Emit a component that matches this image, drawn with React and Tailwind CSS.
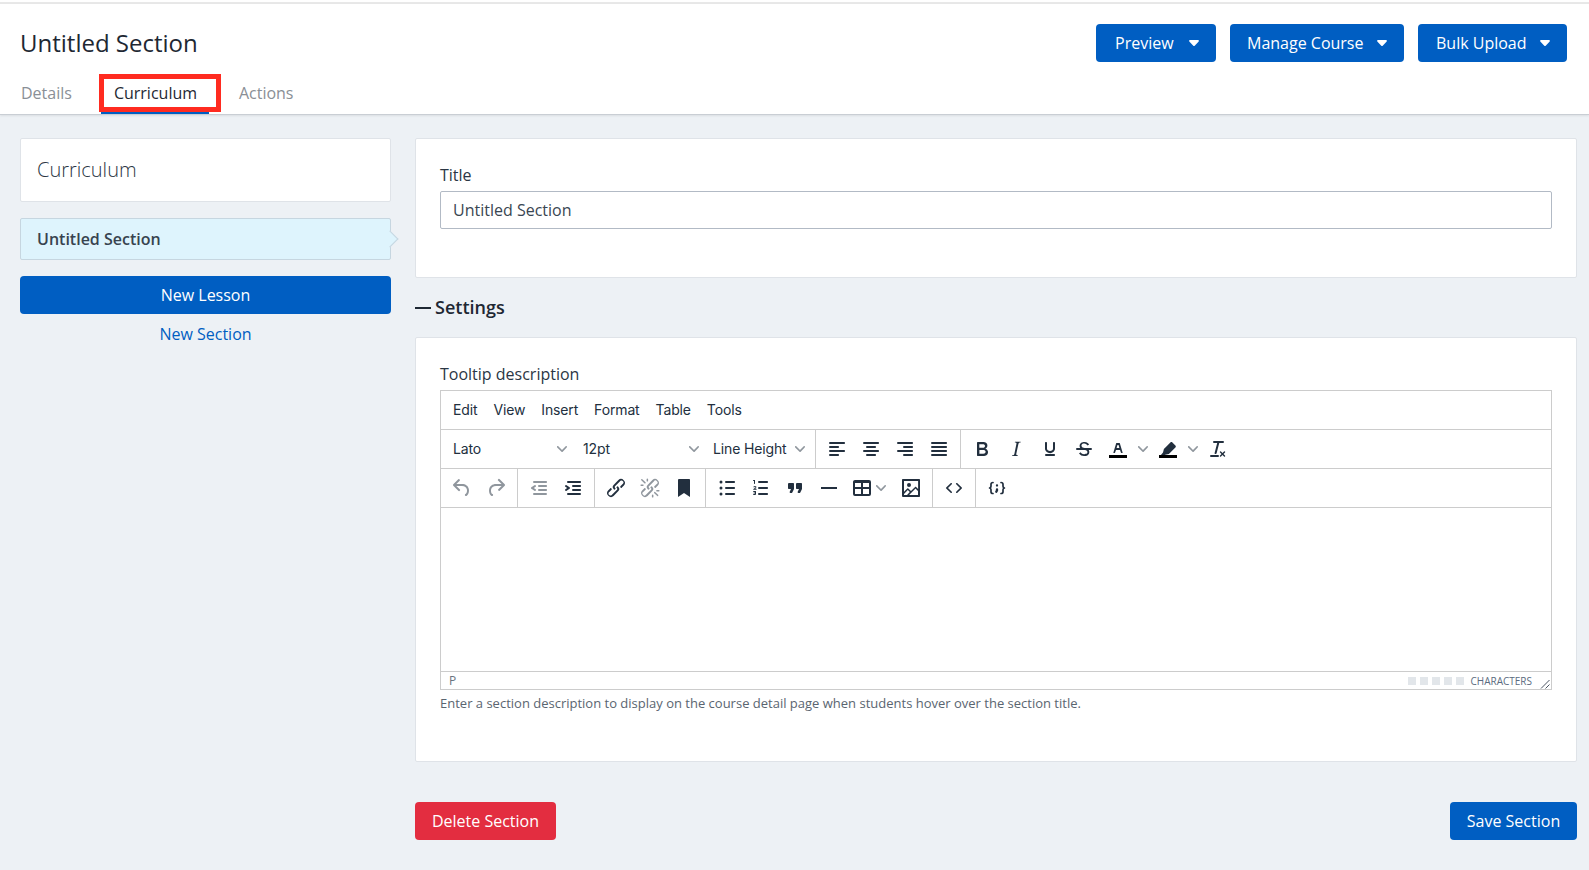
import React from "react";

const P = {
  alignLeft: "M5 5h14c.6 0 1 .4 1 1s-.4 1-1 1H5a1 1 0 1 1 0-2zm0 4h8c.6 0 1 .4 1 1s-.4 1-1 1H5a1 1 0 1 1 0-2zm0 8h8c.6 0 1 .4 1 1s-.4 1-1 1H5a1 1 0 0 1 0-2zm0-4h14c.6 0 1 .4 1 1s-.4 1-1 1H5a1 1 0 0 1 0-2z",
  alignCenter: "M5 5h14c.6 0 1 .4 1 1s-.4 1-1 1H5a1 1 0 1 1 0-2zm3 4h8c.6 0 1 .4 1 1s-.4 1-1 1H8a1 1 0 1 1 0-2zm0 8h8c.6 0 1 .4 1 1s-.4 1-1 1H8a1 1 0 0 1 0-2zm-3-4h14c.6 0 1 .4 1 1s-.4 1-1 1H5a1 1 0 0 1 0-2z",
  alignRight: "M5 5h14c.6 0 1 .4 1 1s-.4 1-1 1H5a1 1 0 1 1 0-2zm6 4h8c.6 0 1 .4 1 1s-.4 1-1 1h-8a1 1 0 0 1 0-2zm0 8h8c.6 0 1 .4 1 1s-.4 1-1 1h-8a1 1 0 0 1 0-2zm-6-4h14c.6 0 1 .4 1 1s-.4 1-1 1H5a1 1 0 0 1 0-2z",
  justify: "M5 5h14c.6 0 1 .4 1 1s-.4 1-1 1H5a1 1 0 1 1 0-2zm0 4h14c.6 0 1 .4 1 1s-.4 1-1 1H5a1 1 0 1 1 0-2zm0 4h14c.6 0 1 .4 1 1s-.4 1-1 1H5a1 1 0 0 1 0-2zm0 4h14c.6 0 1 .4 1 1s-.4 1-1 1H5a1 1 0 0 1 0-2z",
  bold: "M7.8 19c-.3 0-.5 0-.6-.2l-.2-.5V5.7c0-.2 0-.4.2-.5l.6-.2h5c1.5 0 2.7.3 3.5 1 .7.6 1.1 1.4 1.1 2.5a3 3 0 0 1-.6 1.9c-.4.6-1 1-1.6 1.2.4.1.9.3 1.3.6s.8.7 1 1.2c.4.4.5 1 .5 1.6 0 1.3-.4 2.3-1.3 3-.8.7-2.1 1-3.8 1H7.8zm5-8.3c.6 0 1.2-.1 1.6-.5.4-.3.6-.7.6-1.3 0-1.1-.8-1.7-2.4-1.7H9.3v3.5h3.4zm.5 6c.7 0 1.3-.1 1.7-.4.4-.4.6-.9.6-1.5s-.2-1-.7-1.4c-.4-.3-1-.4-2-.4H9.4v3.8h4z",
  italic: "M16.7 4.7l-.1.9h-.3c-.6 0-1 0-1.4.3-.3.3-.4.6-.5 1.1l-2.1 9.8v.6c0 .5.4.8 1.4.8h.2l-.2.8H8l.2-.8h.2c1.1 0 1.8-.5 2-1.5l2-9.8.1-.5c0-.6-.4-.8-1.4-.8h-.3l.2-.9h5.8z",
  underline: "M16 5c.6 0 1 .4 1 1v5.5a4 4 0 0 1-.4 1.8l-1 1.4a5.3 5.3 0 0 1-5.5 1 5 5 0 0 1-1.6-1c-.5-.4-.8-.9-1.1-1.4a4 4 0 0 1-.4-1.8V6c0-.6.4-1 1-1s1 .4 1 1v5.5c0 .3 0 .6.2 1l.6.7a3.3 3.3 0 0 0 2.2.8 3.4 3.4 0 0 0 2.2-.8c.3-.2.4-.5.6-.8l.2-.9V6c0-.6.4-1 1-1zM8 17h8c.6 0 1 .4 1 1s-.4 1-1 1H8a1 1 0 0 1 0-2z",
  strike: "M15.6 8.5c-.5-.7-1-1.1-1.3-1.3-.6-.4-1.3-.6-2-.6-2.7 0-2.8 1.7-2.8 2.1 0 1.6 1.8 2 3.2 2.3 4.4.9 4.6 2.8 4.6 3.9 0 1.4-.7 4.1-5 4.1A6.2 6.2 0 0 1 7 16.4l1.5-1.1c.4.6 1.6 2 3.7 2 1.6 0 2.5-.4 3-1.2.4-.8.3-2-.8-2.6-.7-.4-1.6-.7-2.9-1-1-.2-3.9-.8-3.9-3.6C7.6 6 10.3 5 12.4 5c2.9 0 4.2 1.6 4.7 2.4l-1.5 1.1zM5 11h14a1 1 0 0 1 0 2H5a1 1 0 0 1 0-2z",
  textA: "M8.7 16h-.8a.5.5 0 0 1-.5-.6l2.7-9c.1-.3.3-.4.5-.4h2.8c.2 0 .4.1.5.4l2.7 9a.5.5 0 0 1-.5.6h-.8a.5.5 0 0 1-.4-.4l-.7-2.2c0-.3-.3-.4-.5-.4h-3.4c-.2 0-.4.1-.5.4l-.7 2.2c0 .3-.2.4-.4.4zm2.6-7.6l-.6 2a.5.5 0 0 0 .5.6h1.6a.5.5 0 0 0 .5-.6l-.6-2c0-.3-.3-.4-.5-.4h-.4c-.2 0-.4.1-.5.4z",
  marker: "M7 15.500l.9-3.600L14.400 5.400c.6-.6 1.400-.6 2 0l3 3c.6.6.6 1.400 0 2l-6.500 6.500-3.600.9-.9.700H4.500L7 15.500z",
  removeFormat: "M13.2 6a1 1 0 0 1 0 .2l-2.6 10a1 1 0 0 1-1 .8h-.2a.8.8 0 0 1-.8-1l2.6-10H8a1 1 0 1 1 0-2h9a1 1 0 0 1 0 2h-3.8zM5 18h7a1 1 0 0 1 0 2H5a1 1 0 0 1 0-2zm13 1.5L16.5 18 15 19.5a.7.7 0 0 1-1-1l1.5-1.5-1.5-1.5a.7.7 0 0 1 1-1l1.5 1.5 1.5-1.5a.7.7 0 0 1 1 1L17.5 17l1.5 1.5a.7.7 0 0 1-1 1z",
  undo: "M6.4 8H12c3.7 0 6.2 2 6.8 5.1.6 2.7-.4 5.6-2.3 6.8a1 1 0 0 1-1-1.8c1.1-.6 1.8-2.7 1.4-4.6-.5-2.1-2.1-3.5-4.9-3.5H6.4l3.3 3.3a1 1 0 1 1-1.4 1.4l-5-5a1 1 0 0 1 0-1.4l5-5a1 1 0 0 1 1.4 1.4L6.4 8z",
  redo: "M17.6 10H12c-2.8 0-4.4 1.4-4.9 3.5-.4 2 .3 4 1.4 4.6a1 1 0 1 1-1 1.8c-2-1.2-2.9-4.1-2.3-6.8.6-3 3-5.1 6.8-5.1h5.6l-3.3-3.3a1 1 0 1 1 1.4-1.4l5 5a1 1 0 0 1 0 1.4l-5 5a1 1 0 0 1-1.4-1.4l3.3-3.3z",
  outdent: "M7 5h12c.6 0 1 .4 1 1s-.4 1-1 1H7a1 1 0 1 1 0-2zm5 4h7c.6 0 1 .4 1 1s-.4 1-1 1h-7a1 1 0 0 1 0-2zm0 4h7c.6 0 1 .4 1 1s-.4 1-1 1h-7a1 1 0 0 1 0-2zm-5 4h12a1 1 0 0 1 0 2H7a1 1 0 0 1 0-2zm1.6-3.8a1 1 0 0 1-1.2 1.6l-3-2a1 1 0 0 1 0-1.6l3-2a1 1 0 0 1 1.2 1.6L6.8 12l1.8 1.2z",
  indent: "M7 5h12c.6 0 1 .4 1 1s-.4 1-1 1H7a1 1 0 1 1 0-2zm5 4h7c.6 0 1 .4 1 1s-.4 1-1 1h-7a1 1 0 0 1 0-2zm0 4h7c.6 0 1 .4 1 1s-.4 1-1 1h-7a1 1 0 0 1 0-2zm-5 4h12a1 1 0 0 1 0 2H7a1 1 0 0 1 0-2zm-2.6-3.8L6.2 12l-1.8-1.2a1 1 0 0 1 1.2-1.6l3 2a1 1 0 0 1 0 1.6l-3 2a1 1 0 1 1-1.2-1.6z",
  link: "M6.2 12.3a1 1 0 0 1 1.4 1.4l-2 2a2 2 0 1 0 2.6 2.8l4.8-4.8a1 1 0 0 0 0-1.4 1 1 0 1 1 1.4-1.3 2.9 2.9 0 0 1 0 4L9.6 20a3.9 3.9 0 0 1-5.5-5.5l2-2zm11.6-.6a1 1 0 0 1-1.4-1.4l2-2a2 2 0 1 0-2.6-2.8L11 10.3a1 1 0 0 0 0 1.4A1 1 0 1 1 9.6 13a2.9 2.9 0 0 1 0-4L14.4 4a3.9 3.9 0 0 1 5.5 5.5l-2 2z",
  unlink: "M6.2 12.3a1 1 0 0 1 1.4 1.4l-2.1 2a2 2 0 1 0 2.7 2.8l4.8-4.8a1 1 0 0 0 0-1.4 1 1 0 1 1 1.4-1.3 2.9 2.9 0 0 1 0 4L9.6 20a3.9 3.9 0 0 1-5.5-5.5l2-2zm11.6-.6a1 1 0 0 1-1.4-1.4l2.1-2a2 2 0 1 0-2.7-2.8L11 10.3a1 1 0 0 0 0 1.4A1 1 0 1 1 9.6 13a2.9 2.9 0 0 1 0-4L14.4 4a3.9 3.9 0 0 1 5.5 5.5l-2 2zM7.6 6.3a.8.8 0 0 1-1 1.1L3.3 4.2a.7.7 0 1 1 1-1l3.2 3.1zM5.1 8.6a.8.8 0 0 1 0 1.5H3a.8.8 0 0 1 0-1.5H5zm5-3.5a.8.8 0 0 1-1.5 0V3a.8.8 0 0 1 1.5 0v2zm6 11.8a.8.8 0 0 1 1-1l3.2 3.2a.8.8 0 0 1-1 1L16 17zm-2.2 2a.8.8 0 0 1 1.5 0V21a.8.8 0 0 1-1.5 0V19zm5-3.5a.7.7 0 1 1 0-1.5H21a.8.8 0 0 1 0 1.5h-2.1z",
  bookmark: "M6 4v17l6-4 6 4V4c0-.6-.4-1-1-1H7a1 1 0 0 0-1 1z",
  bullist: "M11 5h8c.6 0 1 .4 1 1s-.4 1-1 1h-8a1 1 0 0 1 0-2zm0 6h8c.6 0 1 .4 1 1s-.4 1-1 1h-8a1 1 0 0 1 0-2zm0 6h8c.6 0 1 .4 1 1s-.4 1-1 1h-8a1 1 0 0 1 0-2zM4.5 6a1.5 1.5 0 1 1 3 0 1.5 1.5 0 0 1-3 0zm0 6a1.5 1.5 0 1 1 3 0 1.5 1.5 0 0 1-3 0zm0 6a1.5 1.5 0 1 1 3 0 1.5 1.5 0 0 1-3 0z",
  numlist: "M10 17h8c.6 0 1 .4 1 1s-.4 1-1 1h-8a1 1 0 0 1 0-2zm0-6h8c.6 0 1 .4 1 1s-.4 1-1 1h-8a1 1 0 0 1 0-2zm0-6h8c.6 0 1 .4 1 1s-.4 1-1 1h-8a1 1 0 1 1 0-2zM6 4v3.5c0 .3-.2.5-.5.5a.5.5 0 0 1-.5-.5V5h-.5a.5.5 0 0 1 0-1H6zm-1 8.8l.2-.2 1.2-1a.5.5 0 0 0-.7-.7l-.3.3a.5.5 0 1 1-.8-.6c.3-.6 1.9-1.2 2.6-.1.5.8-.1 1.4-.5 1.8l-.5.5h1.1c.2 0 .4.2.4.5s-.2.5-.5.5H4.6c-.4 0-.6-.4-.4-.7zM7 15.4v2.9c0 .5-.4.7-1 .7H4.6a.5.5 0 0 1 0-1H6v-.5H5a.5.5 0 0 1 0-1h1v-.5H4.6a.5.5 0 0 1 0-1H6c.6 0 1 .1 1 .4z",
  quote: "M7.5 17h.9c.4 0 .7-.2.9-.6L11 13V8c0-.6-.4-1-1-1H6a1 1 0 0 0-1 1v4c0 .6.4 1 1 1h2l-1.3 2.7a1 1 0 0 0 .8 1.3zm8 0h.9c.4 0 .7-.2.9-.6L19 13V8c0-.6-.4-1-1-1h-4a1 1 0 0 0-1 1v4c0 .6.4 1 1 1h2l-1.3 2.7a1 1 0 0 0 .8 1.3z",
  hr: "M4 11h16v2H4z",
  table: "M19 4a2 2 0 0 1 2 2v12a2 2 0 0 1-2 2H5a2 2 0 0 1-2-2V6c0-1.100.9-2 2-2h14zM11 7H5v4h6V7zm8 0h-6v4h6V7zm-8 6H5v5h6v-5zm8 0h-6v5h6v-5z",
  image: "M5 15.7l3.3-3.2c.3-.3.7-.3 1 0L12 15l4.1-4c.3-.4.8-.4 1 0l2 1.9V5H5v10.7zM5 18V19h3l2.8-2.9-2-2L5 17.9zm14-3l-2.5-2.4-6.4 6.5H19v-4zM4 3h16c.6 0 1 .4 1 1v16c0 .6-.4 1-1 1H4a1 1 0 0 1-1-1V4c0-.6.4-1 1-1zm6 8a2 2 0 1 0 0-4 2 2 0 0 0 0 4z",
  code: "M9.8 15.7c.3.3.3.8 0 1-.3.4-.9.4-1.2 0l-4.4-4.1a.8.8 0 0 1 0-1.2l4.4-4.2c.3-.3.9-.3 1.2 0 .3.3.3.8 0 1.1L6 12l3.8 3.7zm4.4 0L18 12l-3.8-3.7a.7.7 0 0 1 0-1.1c.3-.3.9-.3 1.2 0l4.4 4.2c.3.3.3.9 0 1.2l-4.4 4.2c-.3.3-.9.3-1.2 0a.8.8 0 0 1 0-1.1z",
};

function Icon({ d, dim, bar, odd }) {
  return (
    <svg width="24" height="24" viewBox="0 0 24 24" className={dim ? "opacity-50" : ""} fill="#222f3e" fillRule={odd ? "evenodd" : "nonzero"}>
      <path d={d} />
      {bar ? <path d="M3 18h18v3H3z" fill="#000" /> : null}
    </svg>
  );
}

function Btn({ d, dim, bar, odd }) {
  return (
    <span className="w-[34px] h-[34px] flex items-center justify-center shrink-0">
      <Icon d={d} dim={dim} bar={bar} odd={odd} />
    </span>
  );
}

function Chevron({ cls }) {
  return (
    <svg width="10" height="10" viewBox="0 0 10 10" className={cls} fill="#222f3e" fillOpacity="0.5">
      <path d="M8.7 2.2c.3-.3.8-.3 1 0 .4.4.4.9 0 1.2L5.7 7.8c-.3.3-.9.3-1.2 0L.2 3.4a.8.8 0 0 1 0-1.2c.3-.3.8-.3 1.1 0L5 6l3.7-3.8z" />
    </svg>
  );
}

function ChevBtn() {
  return (
    <span className="w-[16px] h-[34px] flex items-center justify-center shrink-0">
      <Chevron />
    </span>
  );
}

function Select({ label, w }) {
  return (
    <span className={`h-[34px] flex items-center justify-between pl-2 pr-[4px] pb-[1px] shrink-0 ${w}`}>
      <span>{label}</span>
      <Chevron />
    </span>
  );
}

function Group({ children, w, last }) {
  return (
    <div className={`h-full flex items-center pl-1 shrink-0 ${w} ${last ? "" : "border-r border-[#cccccc]"}`}>
      {children}
    </div>
  );
}

function Caret() {
  return (
    <svg width="10" height="6" viewBox="0 0 10 6" fill="#ffffff">
      <path d="M1 0h8c.8 0 1.200.9.700 1.400L5.700 5.700c-.4.4-1 .4-1.400 0L.3 1.400C-.2.900.2 0 1 0z" />
    </svg>
  );
}

function HeaderButton({ label, w, pl }) {
  return (
    <button className={`h-[38px] ${w} ${pl} bg-[#005ec2] rounded-[4px] text-white text-[16px] flex items-center justify-between pr-[17px]`}>
      <span>{label}</span>
      <Caret />
    </button>
  );
}

export default function App() {
  return (
    <div className="min-h-[870px] bg-[#edf1f5] text-[#2b3644] flex flex-col font-['Open_Sans',sans-serif]">
      <div className="h-[2px] bg-white" />
      <div className="h-[2px] bg-[#e8e8e8]" />
      <header className="h-[111px] bg-white border-b border-[#c9ced4] shadow-[0_1px_2px_rgba(0,0,0,0.08)] flex flex-col">
        <div className="flex justify-between items-start pl-5 pr-[22px] pt-5 h-[70px]">
          <h1 className="text-[24px] leading-[38px] text-[#1e2833]">Untitled Section</h1>
          <div className="flex gap-[14px]">
            <HeaderButton label="Preview" w="w-[120px]" pl="pl-[19px]" />
            <HeaderButton label="Manage Course" w="w-[174px]" pl="pl-[17px]" />
            <HeaderButton label="Bulk Upload" w="w-[149px]" pl="pl-[18px]" />
          </div>
        </div>
        <nav className="h-[40px] flex pl-[21px] text-[16px] leading-[38px]">
          <span className="text-[#8a8f96] mr-[29px]">Details</span>
          <span className="relative w-[108px] pl-[13px] h-[40px] text-[#1e2833] border-b-[3px] border-[#005ec2] mr-[17px]">
            Curriculum
            <span className="absolute left-[-2px] top-0 w-[122px] h-[38px] border-[5px] border-[#ff2b20]" />
          </span>
          <span className="text-[#8a8f96] pl-[13px]">Actions</span>
        </nav>
      </header>

      <main className="flex pl-5 pr-[12px] pt-[23px] gap-6 items-start">
        <aside className="w-[371px] shrink-0 flex flex-col">
          <div className="h-[64px] bg-white border border-[#dfe3e8] rounded-[2px] flex items-center pl-4 text-[20px] font-light text-[#2b3644]">
            Curriculum
          </div>
          <div className="relative mt-4 h-[42px] bg-[#def4fd] border border-[#c6d6e0] rounded-[2px] flex items-center pl-4 text-[16px] font-semibold text-[#37434f]">
            Untitled Section
            <span className="absolute right-[-6px] top-[14px] w-[12px] h-[12px] rotate-45 bg-[#def4fd] border-t border-r border-[#c6d6e0]" />
          </div>
          <button className="mt-4 h-[38px] bg-[#005ec2] rounded-[4px] text-white text-[16px]">New Lesson</button>
          <div className="mt-2 text-center text-[16px] leading-6 text-[#005ec2]">New Section</div>
        </aside>

        <section className="flex-1 min-w-0 flex flex-col">
          <div className="h-[140px] bg-white border border-[#dfe3e8] rounded-[2px] pt-6 pl-6 pr-6">
            <div className="text-[16px] leading-6 text-[#2b3644]">Title</div>
            <div className="mt-1 h-[38px] border border-[#b2bac5] rounded-[2px] flex items-center pl-3 text-[16px] text-[#3a4652]">
              Untitled Section
            </div>
          </div>

          <div className="h-[59px] flex items-center gap-1 text-[18px] font-semibold text-[#1e2833]">
            <span className="w-4 h-[2px] bg-[#1e2833]" />
            <span>Settings</span>
          </div>

          <div className="h-[425px] bg-white border border-[#dfe3e8] rounded-[2px] pt-6 px-6">
            <div className="text-[16px] leading-6 text-[#2b3644]">Tooltip description</div>
            <div className="mt-1 h-[300px] border border-[#cccccc] flex flex-col font-['Inter',sans-serif] text-[14px] tracking-[-0.01em] text-[#222f3e]">
              <div className="h-[39px] shrink-0 border-b border-[#cccccc] flex items-center pl-3 pb-[2px] gap-4">
                <span>Edit</span>
                <span>View</span>
                <span>Insert</span>
                <span>Format</span>
                <span>Table</span>
                <span>Tools</span>
              </div>
              <div className="h-[39px] shrink-0 border-b border-[#cccccc] flex items-center">
                <Group w="w-[375px]">
                  <Select label="Lato" w="w-[126px]" />
                  <Select label="12pt" w="w-[128px] ml-1" />
                  <Select label="Line Height" w="w-[104px] ml-[2px]" />
                </Group>
                <Group w="w-[145px]">
                  <Btn d={P.alignLeft} />
                  <Btn d={P.alignCenter} />
                  <Btn d={P.alignRight} />
                  <Btn d={P.justify} />
                </Group>
                <Group last>
                  <Btn d={P.bold} />
                  <Btn d={P.italic} />
                  <Btn d={P.underline} />
                  <Btn d={P.strike} />
                  <Btn d={P.textA} bar odd />
                  <ChevBtn />
                  <Btn d={P.marker} bar />
                  <ChevBtn />
                  <Btn d={P.removeFormat} />
                </Group>
              </div>
              <div className="h-[39px] shrink-0 border-b border-[#cccccc] flex items-center">
                <div className="h-full w-[77px] shrink-0 border-r border-[#cccccc] flex items-center pl-[4px]">
                  <Btn d={P.undo} dim />
                  <Btn d={P.redo} dim />
                </div>
                <Group w="w-[77px]">
                  <Btn d={P.outdent} dim />
                  <Btn d={P.indent} />
                </Group>
                <Group w="w-[111px]">
                  <Btn d={P.link} />
                  <Btn d={P.unlink} dim />
                  <Btn d={P.bookmark} />
                </Group>
                <Group w="w-[227px]">
                  <Btn d={P.bullist} />
                  <Btn d={P.numlist} />
                  <Btn d={P.quote} />
                  <Btn d={P.hr} />
                  <span className="w-[48px] h-[34px] flex items-center shrink-0 pl-[4px]">
                    <Icon d={P.table} odd />
                    <Chevron cls="ml-[2px]" />
                  </span>
                  <Btn d={P.image} odd />
                </Group>
                <Group w="w-[43px]">
                  <Btn d={P.code} />
                </Group>
                <Group last>
                  <span className="w-[34px] h-[34px] flex items-center justify-center shrink-0">
                    <svg width="24" height="24" viewBox="0 0 24 24" fill="none" stroke="#222f3e" strokeWidth="1.700" strokeLinecap="round" strokeLinejoin="round">
                      <path d="M8 6.500c-1.500 0-2 .6-2 1.800v2c0 1-.4 1.500-1.400 1.700 1 .2 1.400.7 1.400 1.700v2c0 1.200.5 1.800 2 1.800" />
                      <path d="M16 6.500c1.500 0 2 .6 2 1.800v2c0 1 .4 1.500 1.400 1.700-1 .2-1.400.7-1.400 1.700v2c0 1.200-.5 1.800-2 1.800" />
                      <path d="M12 9.300v.3M12 13.300v1.200l-.7 1.200" strokeWidth="2.300" />
                    </svg>
                  </span>
                </Group>
              </div>
              <div className="flex-1 border-b border-[#cccccc]" />
              <div className="h-[17px] shrink-0 relative flex items-center pl-[8px] pr-[19px] justify-between font-['Open_Sans',sans-serif] tracking-normal">
                <span className="text-[12px] text-[#6b7480] leading-none">P</span>
                <div className="flex items-center gap-[4px] text-[#5b6b80]">
                  <span className="w-2 h-2 bg-[#e2e6ea]" />
                  <span className="w-2 h-2 bg-[#e2e6ea]" />
                  <span className="w-2 h-2 bg-[#e2e6ea]" />
                  <span className="w-2 h-2 bg-[#e2e6ea]" />
                  <span className="w-2 h-2 bg-[#e2e6ea]" />
                  <span className="ml-[2px] text-[10px] leading-none">CHARACTERS</span>
                </div>
                <svg className="absolute right-[1px] bottom-[0px]" width="10" height="10" viewBox="0 0 10 10" stroke="#4a5563" strokeWidth="1" fill="none">
                  <path d="M1 9.500L9.500 1M5.500 9.500L9.500 5.500" />
                </svg>
              </div>
            </div>
            <div className="mt-[4px] text-[13px] leading-[18px] text-[#5a6570]">
              Enter a section description to display on the course detail page when students hover over the section title.
            </div>
          </div>

          <div className="flex justify-between mt-10 pb-[30px]">
            <button className="h-[38px] w-[141px] bg-[#e32d40] rounded-[4px] text-white text-[16px]">Delete Section</button>
            <button className="h-[38px] w-[127px] bg-[#005ec2] rounded-[4px] text-white text-[16px]">Save Section</button>
          </div>
        </section>
      </main>
    </div>
  );
}
